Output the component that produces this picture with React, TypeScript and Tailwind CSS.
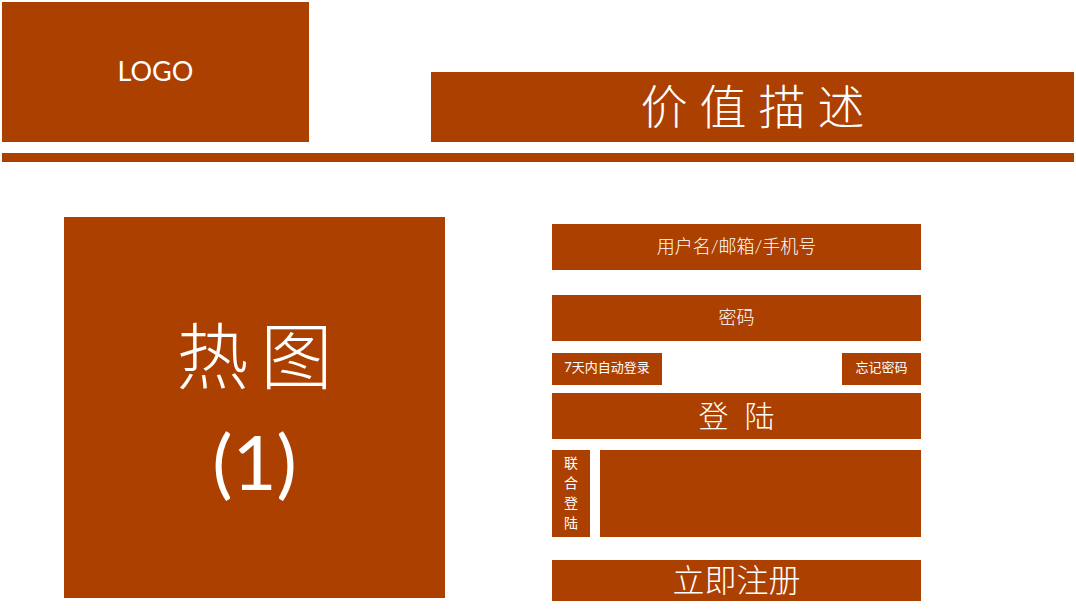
const bar = "bg-[#ac4001] pb-0.5 text-white";
const field =
  "block h-[46px] w-full text-center text-lg font-light placeholder:text-white placeholder:opacity-100";

export default function App() {
  return (
    <div className="bg-white px-0.5 pt-0.5 font-['Lato','Noto_Sans_CJK_SC',sans-serif]">
      <header>
        <div className="flex items-end justify-between">
          <div className={`flex h-[140px] w-[307px] items-center justify-center text-[27px] ${bar}`}>LOGO</div>
          <h1 className={`flex h-[70px] w-3/5 items-center justify-center gap-3 text-[47px] font-light ${bar}`}>
            <span>价</span>
            <span>值</span>
            <span>描</span>
            <span>述</span>
          </h1>
        </div>
        <div className="mt-[11px] h-[9px] bg-[#ac4001]" />
      </header>
      <main className="flex items-start gap-[107px] pt-[55px] pl-[62px]">
        <section className={`flex h-[381px] w-[381px] flex-col items-center justify-center ${bar}`}>
          <div className="flex gap-3 text-[72px] leading-[108px] font-light">
            <span>热</span>
            <span>图</span>
          </div>
          <div className="text-[76px] leading-[104px]">(1)</div>
        </section>
        <form className="w-[369px] pt-[7px]" onSubmit={(e) => e.preventDefault()}>
          <input aria-label="用户名/邮箱/手机号" placeholder="用户名/邮箱/手机号" className={`${field} ${bar}`} />
          <input type="password" aria-label="密码" placeholder="密码" className={`mt-[25px] ${field} ${bar}`} />
          <div className="mt-3 flex justify-between text-[13px]">
            <button type="button" className={`h-8 w-[110px] ${bar}`}>7天内自动登录</button>
            <a href="#forgot" className={`flex h-8 w-[79px] items-center justify-center ${bar}`}>忘记密码</a>
          </div>
          <button
            type="submit"
            className={`mt-2 flex h-[46px] w-full items-center justify-center gap-4 text-3xl font-light ${bar}`}
          >
            <span>登</span>
            <span>陆</span>
          </button>
          <div className="mt-[11px] flex h-[87px] gap-2.5">
            <h2 className={`flex w-[38px] flex-col items-center justify-center text-sm leading-5 ${bar}`}>
              <span>联</span>
              <span>合</span>
              <span>登</span>
              <span>陆</span>
            </h2>
            <div className="flex-1 bg-[#ac4001]" />
          </div>
          <a
            href="#register"
            className={`mt-[23px] flex h-[41px] items-center justify-center text-[32px] font-light ${bar}`}
          >
            立即注册
          </a>
        </form>
      </main>
    </div>
  );
}
